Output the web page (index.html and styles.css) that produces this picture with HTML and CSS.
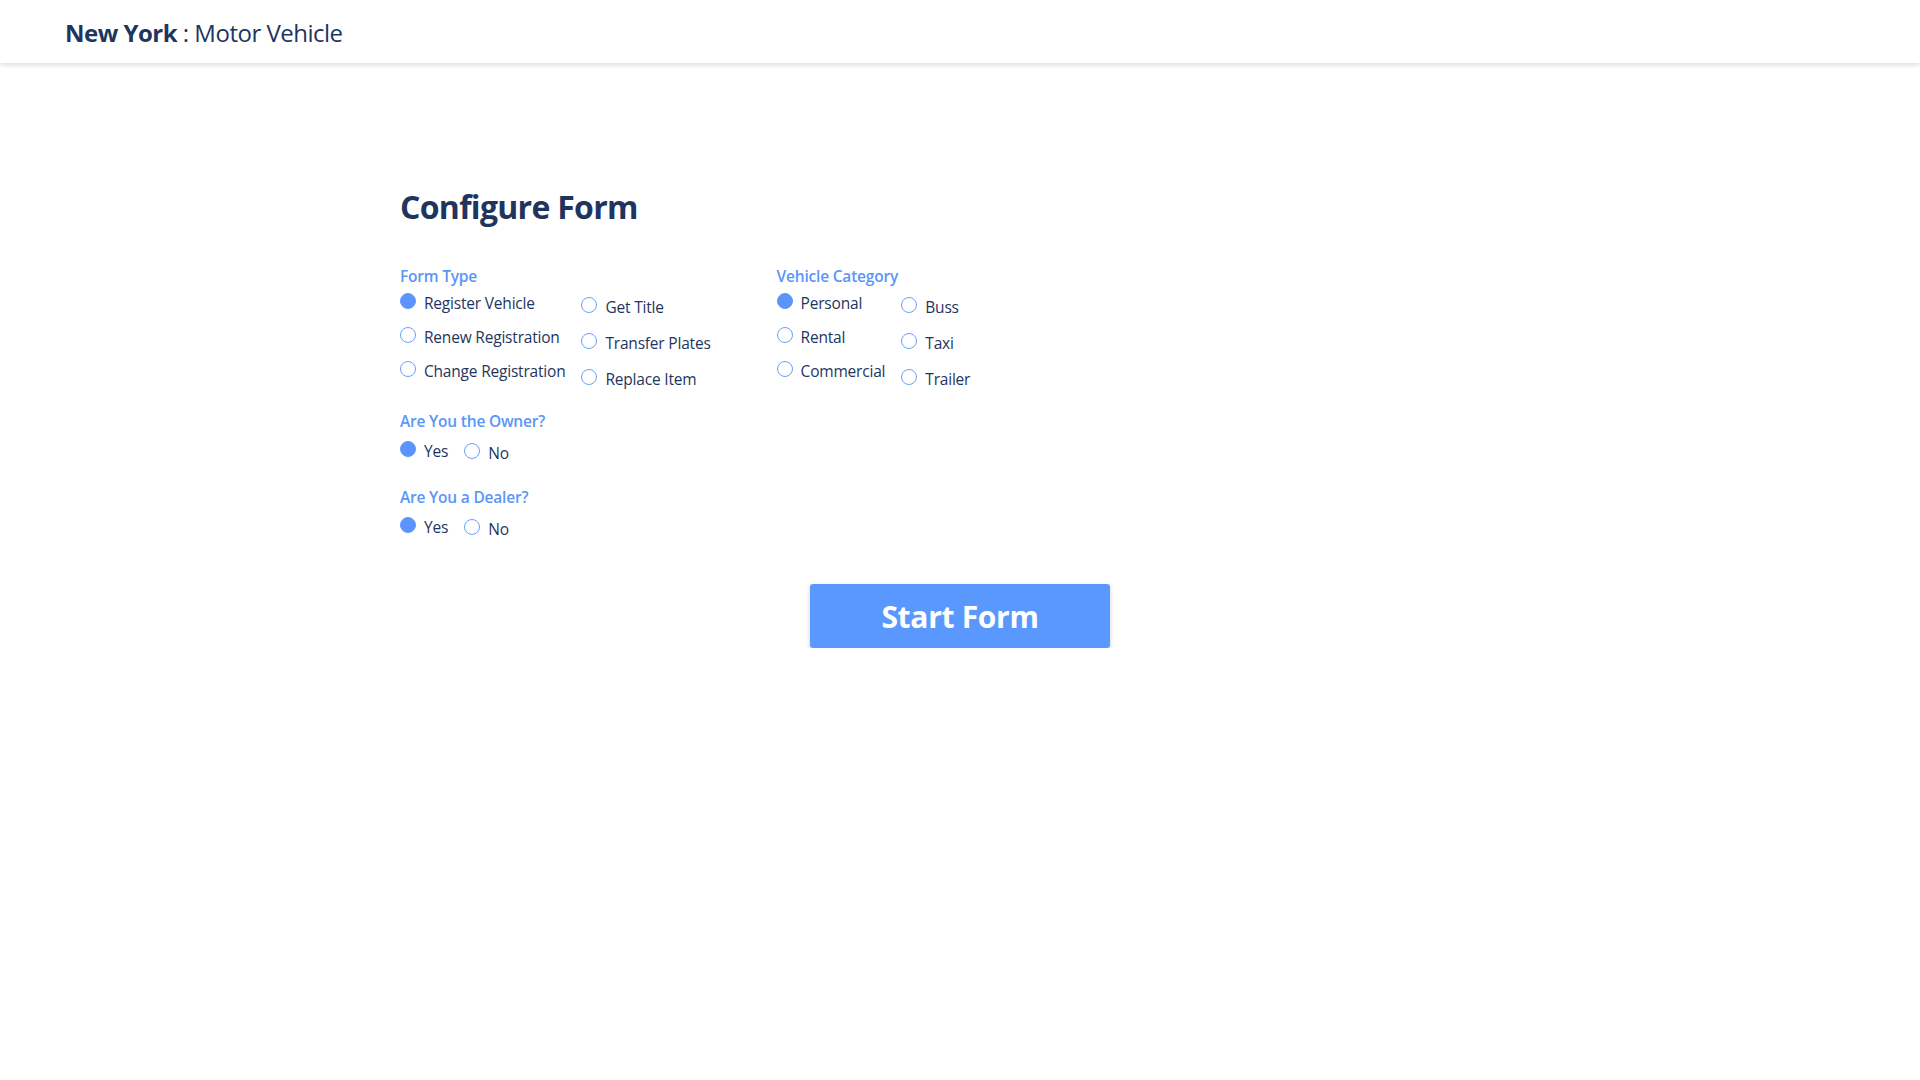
FILE: index.html
```html
<!DOCTYPE html>
<html lang="en">
<head>
<meta charset="utf-8">
<title>New York : Motor Vehicle</title>
<link rel="stylesheet" href="styles.css">
</head>
<body>
<header class="topbar">
  <div class="brand"><span class="brand-strong">New York</span> : Motor Vehicle</div>
</header>
<main class="container">
  <h1 class="title">Configure Form</h1>
  <div class="groups">
    <section class="group">
      <div class="group-label">Form Type</div>
      <div class="cols">
        <div class="col col-a">
          <label class="opt"><span class="radio checked"></span><span class="opt-text">Register Vehicle</span></label>
          <label class="opt"><span class="radio"></span><span class="opt-text">Renew Registration</span></label>
          <label class="opt"><span class="radio"></span><span class="opt-text">Change Registration</span></label>
        </div>
        <div class="col col-b">
          <label class="opt"><span class="radio"></span><span class="opt-text">Get Title</span></label>
          <label class="opt"><span class="radio"></span><span class="opt-text">Transfer Plates</span></label>
          <label class="opt"><span class="radio"></span><span class="opt-text">Replace Item</span></label>
        </div>
      </div>
    </section>
    <section class="group">
      <div class="group-label">Vehicle Category</div>
      <div class="cols">
        <div class="col col-a">
          <label class="opt"><span class="radio checked"></span><span class="opt-text">Personal</span></label>
          <label class="opt"><span class="radio"></span><span class="opt-text">Rental</span></label>
          <label class="opt"><span class="radio"></span><span class="opt-text">Commercial</span></label>
        </div>
        <div class="col col-b">
          <label class="opt"><span class="radio"></span><span class="opt-text">Buss</span></label>
          <label class="opt"><span class="radio"></span><span class="opt-text">Taxi</span></label>
          <label class="opt"><span class="radio"></span><span class="opt-text">Trailer</span></label>
        </div>
      </div>
    </section>
  </div>
  <section class="question">
    <div class="group-label">Are You the Owner?</div>
    <div class="yesno">
      <label class="opt"><span class="radio checked"></span><span class="opt-text">Yes</span></label>
      <label class="opt opt-b"><span class="radio"></span><span class="opt-text">No</span></label>
    </div>
  </section>
  <section class="question">
    <div class="group-label">Are You a Dealer?</div>
    <div class="yesno">
      <label class="opt"><span class="radio checked"></span><span class="opt-text">Yes</span></label>
      <label class="opt opt-b"><span class="radio"></span><span class="opt-text">No</span></label>
    </div>
  </section>
</main>
<div class="actions">
  <button class="start-btn" type="button">Start Form</button>
</div>
</body>
</html>
```

FILE: styles.css
```css
html, body {
  margin: 0;
  padding: 0;
  background: #ffffff;
}
body {
  font-family: "Open Sans", "Noto Sans", "Liberation Sans", sans-serif;
  color: #1f3560;
}
.topbar {
  height: 63px;
  display: flex;
  align-items: center;
  padding-left: 65px;
  background: #fff;
  box-shadow: 0 2px 5px rgba(0, 0, 0, 0.14);
}
.brand {
  font-size: 24px;
  color: #1f3560;
  letter-spacing: -0.5px;
  padding-top: 2px;
}
.brand-strong {
  font-weight: 700;
}
.container {
  width: 1120px;
  margin: 0 auto;
  padding-top: 121px;
}
.title {
  margin: 0 0 36px 0;
  font-size: 32px;
  font-weight: 700;
  line-height: 46px;
  letter-spacing: -0.7px;
  color: #1f3560;
}
.groups {
  display: flex;
  gap: 66px;
}
.group-label {
  font-size: 15.5px;
  font-weight: 600;
  color: #5b95f9;
  line-height: 20px;
  letter-spacing: -0.2px;
}
.cols {
  display: flex;
  gap: 16px;
}
.col {
  display: flex;
  flex-direction: column;
}
.col-a .opt {
  height: 34px;
}
.col-b {
  padding-top: 3px;
}
.col-b .opt {
  height: 36px;
}
.opt {
  display: flex;
  align-items: center;
  font-size: 15.5px;
  color: #1f3560;
  letter-spacing: -0.2px;
  cursor: pointer;
}
.radio {
  box-sizing: border-box;
  width: 16px;
  height: 16px;
  border-radius: 50%;
  border: 1.5px solid #6ca0fb;
  background: #fff;
  margin-right: 8px;
  margin-bottom: 4px;
  flex: 0 0 auto;
}
.radio.checked {
  border-color: #5b95fb;
  background: #5b95fb;
}
.question {
  margin-top: 14px;
}
.question .group-label {
  margin-bottom: 3px;
}
.question + .question {
  margin-top: 19px;
}
.yesno {
  display: flex;
  gap: 16px;
  height: 34px;
}
.opt-b {
  padding-top: 4px;
}
.actions {
  display: flex;
  justify-content: center;
  margin-top: 40px;
}
.start-btn {
  width: 300px;
  height: 64px;
  border: none;
  border-radius: 3px;
  background: #5b98fe;
  color: #ffffff;
  font-family: "Open Sans", "Noto Sans", sans-serif;
  font-size: 30px;
  font-weight: 700;
  letter-spacing: -0.3px;
  box-shadow: 0 2px 5px rgba(0, 0, 0, 0.18);
  cursor: pointer;
}
```
